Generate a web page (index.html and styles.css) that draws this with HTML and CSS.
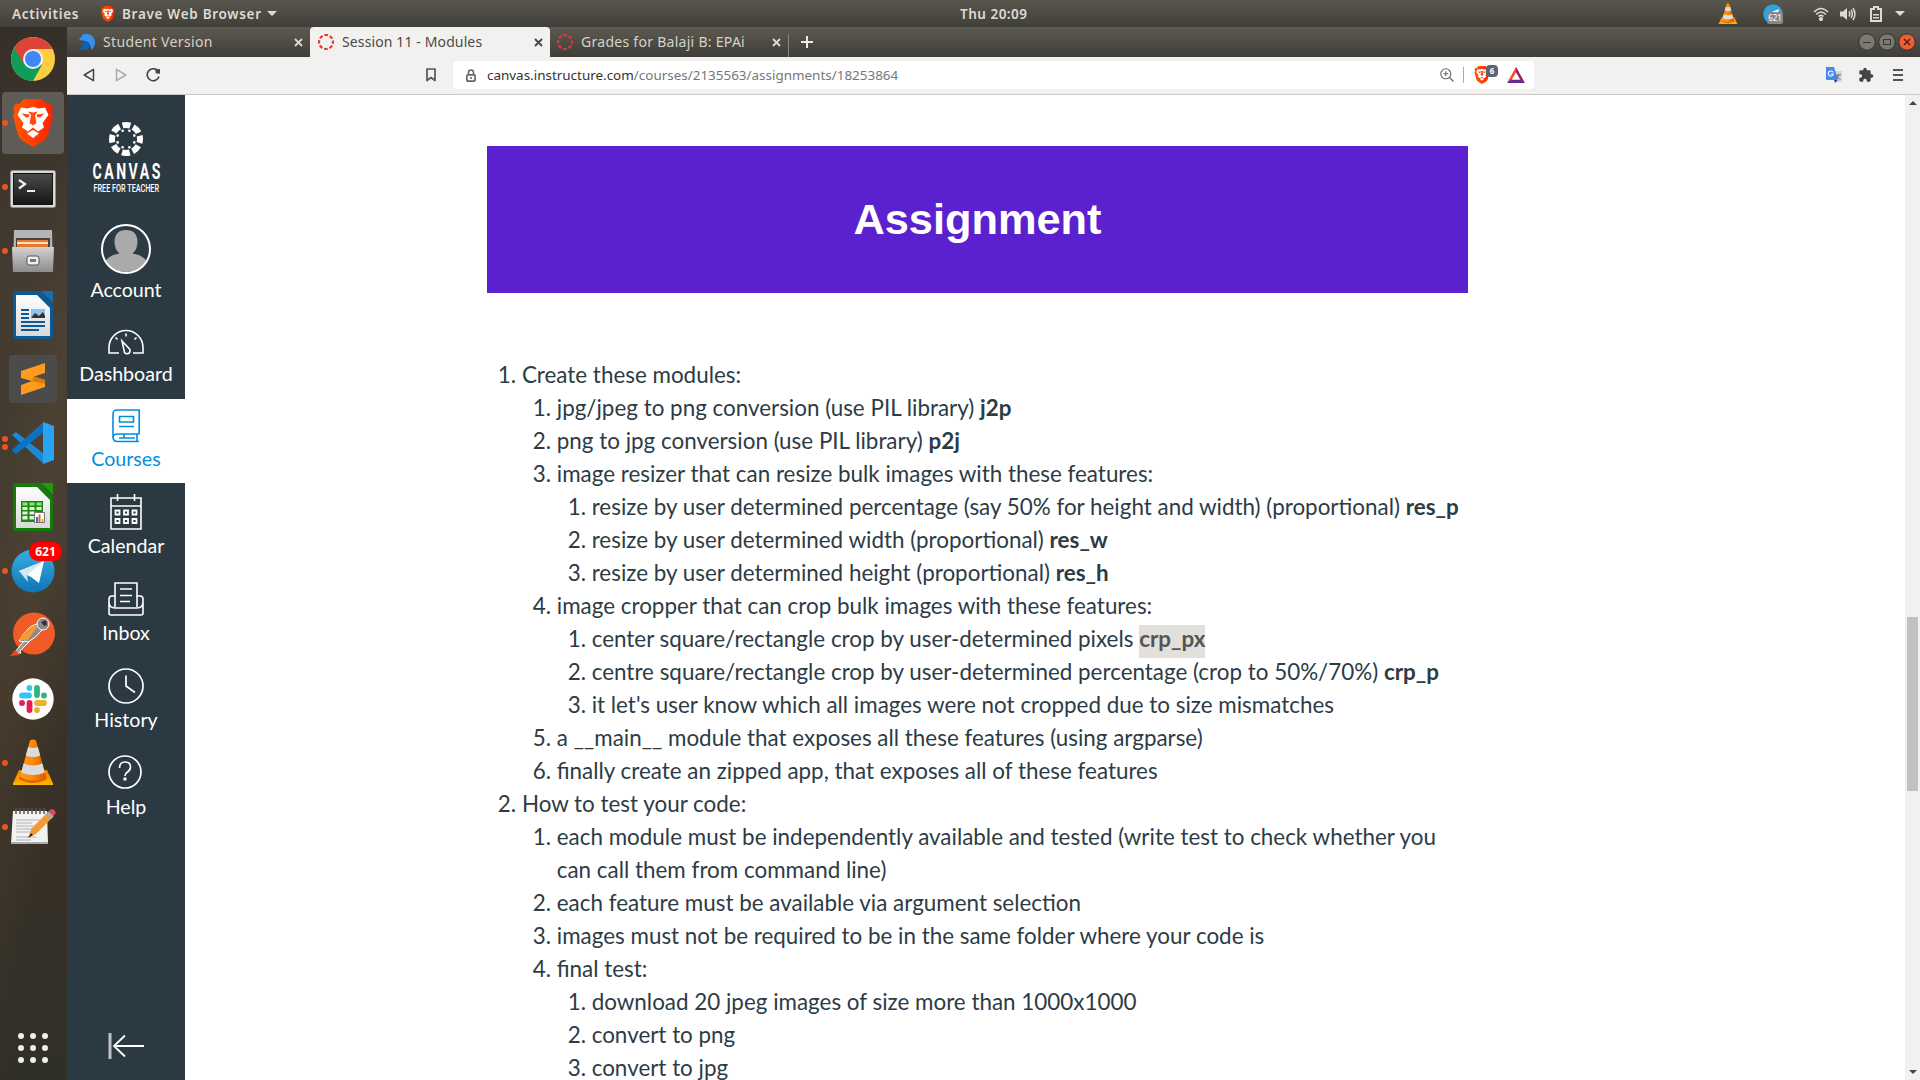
FILE: index.html
```html
<!DOCTYPE html>
<html lang="en">
<head>
<meta charset="utf-8">
<title>Session 11 - Modules</title>
<link rel="stylesheet" href="styles.css">
</head>
<body>
<svg width="0" height="0" class="defs">
  <defs>
    <linearGradient id="gBrave" x1="0" x2="1"><stop offset="0" stop-color="#ff5601"/><stop offset=".5" stop-color="#ff4000"/><stop offset="1" stop-color="#ff1f01"/></linearGradient>
    <linearGradient id="gTerm" x1="0" y1="0" x2="0" y2="1"><stop offset="0" stop-color="#4a4a48"/><stop offset="1" stop-color="#161616"/></linearGradient>
    <linearGradient id="gGrey" x1="0" y1="0" x2="0" y2="1"><stop offset="0" stop-color="#d2d2d2"/><stop offset="1" stop-color="#8c8c8c"/></linearGradient>
    <linearGradient id="gPage" x1="0" y1="0" x2="0" y2="1"><stop offset="0" stop-color="#fff"/><stop offset="1" stop-color="#d8d8d8"/></linearGradient>
    <linearGradient id="gTele" x1="0" y1="0" x2="0" y2="1"><stop offset="0" stop-color="#37aee2"/><stop offset="1" stop-color="#1075b5"/></linearGradient>
    <linearGradient id="gCone" x1="0" x2="1"><stop offset="0" stop-color="#ff9a1f"/><stop offset=".5" stop-color="#ff8a00"/><stop offset="1" stop-color="#d65a00"/></linearGradient>
    <linearGradient id="gBase" x1="0" y1="0" x2="0" y2="1"><stop offset="0" stop-color="#f57c00"/><stop offset="1" stop-color="#ffb300"/></linearGradient>
    <symbol id="cone" viewBox="0 0 42 48">
      <path d="M7 31h28l6 13.500v1.500H1v-1.500z" fill="url(#gBase)"/>
      <path d="M8 36q13 9 26 0l1 4q-14 8-28 0z" fill="#e06500"/>
      <path d="M18 1.500q3-2 6 0L34 38q-13 7-26 0z" fill="url(#gCone)"/>
      <path d="M16.200 8q5 2 9.600 0l2.400 8.500q-7 3-14.400 0zM11.600 24.500q9.500 4 18.800 0l2.400 9q-11.800 5-23.600 0z" fill="#d9dde0"/>
    </symbol>
    <symbol id="ring" viewBox="0 0 16 16"><circle cx="8" cy="8" r="7" fill="none" stroke="#e03c31" stroke-width="2.200" stroke-dasharray="3.600 1.898" stroke-dashoffset="1.800"/></symbol>
    <symbol id="lion" viewBox="0 0 40 48">
      <path d="M11 0h18l5 5 3-.5 3 5-1.500 4L40 17l-5 19q-1 3-4 5.500L20 48 9 41.500Q6 39 5 36L0 17l1.500-3.500L0 9.500l3-5 3 .5z" fill="url(#gBrave)"/>
      <path d="M8 8.500l6 1 6-1.500 6 1.500 6-1L35.500 16l-6 8 1.500 4.500-6 4-5-4-5 4-6-4 1.500-4.500-6-8zM20 31l6 3.500-6 4.500-6-4.500z" fill="#fff"/>
      <path d="M8.500 14.500l8 1-.5 2.500-3 .5zM31.500 14.500l-8 1 .5 2.500 3 .5zM18 16l-1.500 8 3.500 2.500 3.500-2.500L22 16l3-3.500-5 1-5-1z" fill="#ff4a10"/>
    </symbol>
  </defs>
</svg>

<header class="topbar">
  <span class="activities">Activities</span>
  <svg class="app-ico" width="14" height="16"><use href="#lion"/></svg>
  <span class="app-name">Brave Web Browser</span>
  <i class="caret"></i>
  <time class="clock">Thu 20:09</time>
  <div class="tray">
    <svg width="20" height="22"><use href="#cone"/></svg>
    <div class="tray-tele"><svg width="20" height="20" viewBox="0 0 20 20"><circle cx="10" cy="10" r="9.800" fill="#2ba3dc"/><path d="M4 10l12-5-2 9z" fill="#fff"/></svg><b>621</b></div>
    <svg class="t-wifi" width="16" height="14" viewBox="0 0 16 14" fill="none" stroke="#dcdad5" stroke-width="1.600"><path d="M1 5q7-7 14 0M3.200 7.300q4.800-4.600 9.600 0M5.500 9.500q2.500-2.200 5 0"/><circle cx="8" cy="12" r="1.300" fill="#dcdad5"/></svg>
    <svg class="t-vol" width="16" height="14" viewBox="0 0 16 14" fill="none" stroke="#dcdad5" stroke-width="1.500"><path d="M0 4.500h3L7 1v12L3 9.500H0z" fill="#dcdad5" stroke="none"/><path d="M9 4.500q1.500 2.500 0 5M11 2.800q2.600 4.200 0 8.400M13 1q3.800 6 0 12"/></svg>
    <svg class="t-bat" width="12" height="16" viewBox="0 0 12 16"><path d="M4 1h4v2h3v12H1V3h3z" fill="none" stroke="#dcdad5" stroke-width="2"/><path d="M3 8h6v1.500H3zM3 11h6v1.500H3z" fill="#dcdad5"/></svg>
    <i class="caret"></i>
  </div>
</header>

<div class="desktop">
  <nav class="dock">
    <div class="app"><svg width="46" height="46" viewBox="0 0 46 46"><circle cx="23" cy="23" r="22" fill="#ffcd40"/><path d="M23 23L4 12A22 22 0 0 0 23 45l9-16z" fill="#0f9d58"/><path d="M4 12A22 22 0 0 1 42.300 13H23L14 28z" fill="#db4437"/><circle cx="23" cy="23" r="10" fill="#f1f1f1"/><circle cx="23" cy="23" r="8" fill="#4285f4"/></svg></div>
    <div class="app active run"><svg width="40" height="48"><use href="#lion"/></svg></div>
    <div class="app run term"><svg width="46" height="38" viewBox="0 0 46 38"><rect x=".5" y=".5" width="45" height="37" rx="2" fill="#d9d9d9" stroke="#8f8f8f"/><rect x="3.500" y="3.500" width="39" height="31" fill="url(#gTerm)" stroke="#111"/><path d="M9 10l6 4-6 4.500M17 21h8" fill="none" stroke="#eee" stroke-width="2.200"/></svg></div>
    <div class="app run"><svg width="42" height="44" viewBox="0 0 42 44"><path d="M2 1h38l1 41H1z" fill="#b4b4b4"/><path d="M4 9h34v9H4z" fill="#4a4038"/><path d="M5 11h31v8H5z" fill="#e8772e"/><path d="M5 13h31v2H5z" fill="#fbe0bd"/><path d="M0 18h42l-1 25H1z" fill="url(#gGrey)"/><rect x="15" y="27" width="12" height="9" rx="2" fill="#eee" stroke="#555"/><path d="M18 30h6v3h-6z" fill="#777"/></svg></div>
    <div class="app"><svg width="40" height="48" viewBox="0 0 40 48"><path d="M2 0h26l12 14v32q0 2-2 2H2q-2 0-2-2V2q0-2 2-2z" fill="#0c5a93"/><path d="M28 0h12v12z" fill="#1270b4"/><path d="M3 4h21l13 13v28H3z" fill="url(#gPage)"/><path d="M8 18h8v2H8zm0 4h8v2H8zm0 4h8v2H8zm0 4h24v2H8zm0 4h24v2H8zm0 4h18v2H8z" fill="#0c5a93"/><path d="M18 18h14v9H18z" fill="#88c6ee"/><path d="M18 27l4-5 4 3 4-4 2 4v2z" fill="#333"/></svg></div>
    <div class="app"><svg width="48" height="48" viewBox="0 0 48 48"><rect width="48" height="48" rx="3" fill="#4b4b4b"/><path d="M12 16l24-8v10l-11 3.500L36 25v7l-24 8V30l11-4-11-3z" fill="#ff9a1f"/><path d="M25 21.500L36 25v4l-13-3z" fill="#d97a10"/></svg></div>
    <div class="app run two"><svg width="42" height="42" viewBox="0 0 42 42"><path d="M0 28l4 4L32 9V0z" fill="#0a6fba"/><path d="M0 13l4-3 28 22v10z" fill="#1a8ad6"/><path d="M0 28L32 0v10L4 32z" fill="#0c72bd"/><path d="M31 0l11 4v34l-11 4z" fill="#2aa3f0"/></svg></div>
    <div class="app"><svg width="40" height="48" viewBox="0 0 40 48"><path d="M2 0h26l12 14v32q0 2-2 2H2q-2 0-2-2V2q0-2 2-2z" fill="#157a08"/><path d="M28 0h12v12z" fill="#1d9a0a"/><path d="M3 4h21l13 13v28H3z" fill="url(#gPage)"/><path d="M8 18h22v21H8z" fill="#1c8a10"/><path d="M9.500 19.500h5v3h-5zm7 0h5v3h-5zm7 0h5v3h-5z" fill="#8ce57e"/><path d="M9.500 24h5v3h-5zm7 0h5v3h-5zm7 0h5v3h-5zm-14 4.500h5v3h-5zm7 0h5v3h-5zm-7 4.500h5v3.500h-5zm7 0h5v3.500h-5z" fill="#e8f6e4"/><path d="M21.500 29.500h10v10h-10z" fill="#fff" stroke="#777"/><path d="M23 34h2v5h-2z" fill="#1e7cc8"/><path d="M25.500 31.500h2V39h-2z" fill="#e8641a"/><path d="M28.500 36h2v3h-2z" fill="#f0b020"/></svg></div>
    <div class="app run"><svg width="44" height="44" viewBox="0 0 44 44"><circle cx="22" cy="22" r="21.500" fill="url(#gTele)"/><path d="M8 22l25-10-5 22-8-6z" fill="#fff"/><path d="M8 22l25-10-17 14 1 7z" fill="#d3e6f2"/></svg><b class="badge">621</b></div>
    <div class="app"><svg width="46" height="46" viewBox="0 0 46 46"><circle cx="24" cy="21.500" r="21" fill="#f15a29"/><path d="M9 29q8-15 18-17l5 6q-6 8-14 12z" fill="#8b8b8b" stroke="#fff"/><path d="M9 28q6-11 16-15l2 2-9 13z" fill="#f79a31"/><circle cx="33" cy="12" r="6" fill="#8b8b8b" stroke="#fff"/><path d="M31 10l5-2 1 5-3 1z" fill="#333"/><path d="M14 29L4 41h7l-1-2 9-9z" fill="#999" stroke="#fff"/><path d="M5 38l-5 6 10-1z" fill="#e04a1d"/></svg></div>
    <div class="app"><svg width="42" height="42" viewBox="0 0 42 42"><circle cx="21" cy="21" r="20.700" fill="#fff"/><g stroke-width="5.800" stroke-linecap="round"><path d="M25 10v7M32 17.500h.1" stroke="#2eb67d"/><path d="M10 17.500h7M17.500 10v.1" stroke="#36c5f0"/><path d="M17.500 25v7M10 25h.1" stroke="#e01e5a"/><path d="M25 25h7M25 32v.1" stroke="#ecb22e"/></g></svg></div>
    <div class="app run"><svg width="42" height="48"><use href="#cone"/></svg></div>
    <div class="app run"><svg width="48" height="40" viewBox="0 0 48 40"><path d="M4 4h34l1 33H2z" fill="#f2f2f2"/><path d="M2 35h37v2H2z" fill="#aaa"/><path d="M7 13h24M7 16h16M7 19h21M7 22h22M7 25h14M7 30h20M7 33h15" stroke="#b2b2b2"/><path d="M7 1v6M11 1v6M15 1v6M19 1v6M23 1v6M27 1v6M31 1v6M35 1v6" stroke="#555" stroke-width="1.500"/><path d="M39 5l5 5-17 17-7 3 2-8z" fill="#f29a34"/><path d="M39 5l3-3q5 0 4.500 4.500L44 10z" fill="#d94b52"/><path d="M37 7l2.500-2.500 5 5L42 12z" fill="#aaa"/><path d="M22 26l-3 5 5-3z" fill="#222"/></svg></div>
    <svg class="grid" width="32" height="32" viewBox="0 0 32 32" fill="#eeeeec"><circle cx="4" cy="4" r="3"/><circle cx="16" cy="4" r="3"/><circle cx="28" cy="4" r="3"/><circle cx="4" cy="16" r="3"/><circle cx="16" cy="16" r="3"/><circle cx="28" cy="16" r="3"/><circle cx="4" cy="28" r="3"/><circle cx="16" cy="28" r="3"/><circle cx="28" cy="28" r="3"/></svg>
  </nav>

  <div class="window">
    <div class="tabs">
      <div class="tab t1"><svg width="16" height="16" viewBox="0 0 16 16"><path d="M4 0h5q7 2 7 9 0 4-4 7 0-7-5-9l-7-1z" fill="#3391f0"/><path d="M5 7q6 1 6 5l-3 4H0l4-4H0q4-1 5-5z" fill="#0a62b8"/></svg><span>Student Version</span><svg class="x" width="9" height="9" viewBox="0 0 9 9"><path d="M1 1l7 7M8 1L1 8"/></svg></div>
      <div class="tab t2"><svg width="16" height="16"><use href="#ring"/></svg><span>Session 11 - Modules</span><svg class="x" width="9" height="9" viewBox="0 0 9 9"><path d="M1 1l7 7M8 1L1 8"/></svg></div>
      <div class="tab t3"><svg width="16" height="16"><use href="#ring"/></svg><span>Grades for Balaji B: EPAi</span><svg class="x" width="9" height="9" viewBox="0 0 9 9"><path d="M1 1l7 7M8 1L1 8"/></svg></div>
      <i class="divider"></i>
      <svg class="plus" width="12" height="12" viewBox="0 0 12 12"><path d="M6 0v12M0 6h12" stroke="#eceae6" stroke-width="2"/></svg>
      <div class="winbtns">
        <svg width="18" height="18" viewBox="0 0 18 18"><circle cx="9" cy="9" r="8.200" fill="#7b7970" stroke="#35342f"/><path d="M5 9.500h8" stroke="#35342f"/></svg>
        <svg width="18" height="18" viewBox="0 0 18 18"><circle cx="9" cy="9" r="8.200" fill="#7b7970" stroke="#35342f"/><path d="M5.500 6.500h7v5h-7z" fill="none" stroke="#35342f"/></svg>
        <svg width="18" height="18" viewBox="0 0 18 18"><circle cx="9" cy="9" r="8.200" fill="#ea5f33" stroke="#35342f"/><path d="M6 6l6 6M12 6l-6 6" stroke="#45200f" stroke-width="1.300"/></svg>
      </div>
    </div>
    <div class="toolbar">
      <svg class="back" width="12" height="14" viewBox="0 0 12 14"><path d="M10.500 1.300v11.400L1.200 7z" fill="none" stroke="#444" stroke-width="1.500" stroke-linejoin="round"/></svg>
      <svg class="fwd" width="12" height="14" viewBox="0 0 12 14"><path d="M1.500 1.300v11.400L10.800 7z" fill="none" stroke="#aaa" stroke-width="1.500" stroke-linejoin="round"/></svg>
      <svg class="reload" width="15" height="14" viewBox="0 0 15 14"><path d="M11.500 2.500A6 6 0 1 0 13 8.500" fill="none" stroke="#444" stroke-width="1.600"/><path d="M9.500 1.500L14 1v4.500q-3 1-4.500-1z" fill="#444"/></svg>
      <svg class="bm" width="10" height="14" viewBox="0 0 10 14"><path d="M1 1h8v11.500L5 9.500l-4 3z" fill="none" stroke="#555" stroke-width="1.700" stroke-linejoin="round"/></svg>
      <div class="url">
        <svg class="lock" width="10" height="13" viewBox="0 0 10 13"><path d="M2.500 6V3.500q0-2.500 2.500-2.500t2.500 2.500V6" fill="none" stroke="#666" stroke-width="1.600"/><rect x=".9" y="5.900" width="8.200" height="6.200" rx="1" fill="none" stroke="#666" stroke-width="1.700"/><path d="M4.200 8h1.600v2H4.200z" fill="#666"/></svg>
        <span class="addr">canvas.instructure.com<em>/courses/2135563/assignments/18253864</em></span>
        <svg class="mag" width="14" height="14" viewBox="0 0 14 14" fill="none" stroke="#666" stroke-width="1.100"><circle cx="5.800" cy="5.800" r="5"/><path d="M9.500 9.500l4 4M3.300 5.800h5M5.800 3.300v5"/></svg>
        <i class="sep"></i>
        <div class="shield"><svg width="16" height="18"><use href="#lion"/></svg><b>6</b></div>
        <svg class="bat" width="18" height="16" viewBox="0 0 18 16"><path d="M9 0l3 5-6 7-6 4z" fill="#ff4724"/><path d="M9 0l9 16-6-4-3-7z" fill="#9e1f63"/><path d="M0 16l4-3.500h10l4 3.500z" fill="#662d91"/><path d="M9 5.500l4.200 7H4.800z" fill="#fff"/></svg>
      </div>
      <svg class="gt" width="17" height="16" viewBox="0 0 17 16"><path d="M6 4h10v11H9z" fill="#d8d8d8"/><path d="M0 0h8l4 13H1q-1 0-1-1z" fill="#4a86f0"/><path d="M8 13h4l-3 3z" fill="#2850b8"/><path d="M7 5.200A2.500 2.500 0 1 0 7.300 7H5" fill="none" stroke="#fff" stroke-width="1.200"/><path d="M10 8h5M12.500 7v1q-.5 3-2.500 4M11 9q1 2.500 3.500 3.500" fill="none" stroke="#5d7588"/></svg>
      <svg class="puz" width="16" height="16" viewBox="0 0 24 24"><path d="M20.500 11H19V7a2 2 0 0 0-2-2h-4V3.500a2.500 2.500 0 0 0-5 0V5H4a2 2 0 0 0-2 2v3.800h1.500a2.700 2.700 0 0 1 0 5.400H2V20a2 2 0 0 0 2 2h3.800v-1.500a2.700 2.700 0 0 1 5.400 0V22H17a2 2 0 0 0 2-2v-4h1.500a2.500 2.500 0 0 0 0-5z" fill="#444"/></svg>
      <svg class="ham" width="10" height="12" viewBox="0 0 10 12"><path d="M0 1h10M0 6h10M0 11h10" stroke="#555" stroke-width="1.800"/></svg>
    </div>

    <div class="page">
      <nav class="side">
        <div class="logo">
          <svg width="74" height="78" viewBox="0 0 74 78" fill="#fff">
            <g transform="translate(35 18)"><circle r="14" fill="none" stroke="#fff" stroke-width="6" stroke-dasharray="7.900 3.096" stroke-dashoffset="3.950"/>
            <circle cx="8.300" cy="3.400" r="1.300"/><circle cx="3.400" cy="8.300" r="1.300"/><circle cx="-3.400" cy="8.300" r="1.300"/><circle cx="-8.300" cy="3.400" r="1.300"/><circle cx="8.300" cy="-3.400" r="1.300"/><circle cx="3.400" cy="-8.300" r="1.300"/><circle cx="-3.400" cy="-8.300" r="1.300"/><circle cx="-8.300" cy="-3.400" r="1.300"/></g>
            <text class="lg1" transform="translate(1.500 58) scale(.64 1)" textLength="106">CANVAS</text>
            <text class="lg2" x="2.500" y="71" textLength="65.500" lengthAdjust="spacingAndGlyphs">FREE FOR TEACHER</text>
          </svg>
        </div>
        <a class="item acc"><svg width="50" height="50" viewBox="0 0 50 50"><circle cx="25" cy="25" r="24" fill="#2d3b45"/><path d="M4.500 37q4-6 14-7.500-5-4-5-12Q14 6 25 6t11.500 11.500q0 8-5 12 10 1.500 14 7.500Q38 48 25 48T4.500 37z" fill="#aaa"/><circle cx="25" cy="25" r="24" fill="none" stroke="#fff" stroke-width="2"/></svg><span>Account</span></a>
        <a class="item dash"><svg width="36" height="36" viewBox="0 0 36 36" fill="none" stroke="#fff" stroke-width="1.600"><path d="M11 31H1v-5.500a17 17 0 0 1 34 0V31H25M18 11.500v3M7.500 15.500l2 2M28.500 15.500l-2 2"/><path d="M14 19l7.500 8a3 3 0 1 1-5 3.500z"/></svg><span>Dashboard</span></a>
        <a class="item sel"><svg width="36" height="36" viewBox="0 0 36 36" fill="none" stroke="#008ee2" stroke-width="1.600"><path d="M31.200 27V3H9q-4 0-4 4v23q0 4.500 4.500 4.500H31M31.200 27H9.500Q5 27 5 31M29 27v7M11 31h16M16 27v4"/><path d="M11.500 9.500h14v5.500h-14zM11 19.500h15" /></svg><span>Courses</span></a>
        <a class="item"><svg width="36" height="36" viewBox="0 0 36 36" fill="none" stroke="#fff" stroke-width="1.600"><path d="M3 4h30v31H3zM3 12h30M9.500 0v7M26.500 0v7"/><g stroke-width="1.800"><path d="M7.500 16.500h4v4h-4zM16 16.500h4v4h-4zM24.500 16.500h4v4h-4zM7.500 25h4v4h-4zM16 25h4v4h-4zM24.500 25h4v4h-4z"/></g></svg><span>Calendar</span></a>
        <a class="item"><svg width="36" height="36" viewBox="0 0 36 36" fill="none" stroke="#fff" stroke-width="1.600"><path d="M7 26V2h22v24M7 15H4q-3 0-3 3v14q0 2 2 2h30q2 0 2-2V18q0-3-3-3h-3M1 21q0 6 6 6h22q6 0 6-6M12 8h12M12 14.500h12M12 20.500h10"/></svg><span>Inbox</span></a>
        <a class="item"><svg width="36" height="36" viewBox="0 0 36 36" fill="none" stroke="#fff" stroke-width="1.700"><circle cx="18" cy="18" r="17"/><path d="M18 7.500V18l9 6.500"/></svg><span>History</span></a>
        <a class="item"><svg width="36" height="36" viewBox="0 0 36 36" fill="none" stroke="#fff" stroke-width="1.700"><circle cx="17" cy="17" r="16"/><path d="M11.500 13q0-6 5.500-6t5.500 5q0 3-3 5-2.500 1.500-2.500 4"/><path d="M15.500 22.500h3v3h-3z" fill="#fff" stroke="none"/></svg><span>Help</span></a>
        <svg class="collapse" width="36" height="26" viewBox="0 0 36 26" fill="none" stroke="#fff" stroke-width="1.800"><path d="M2 0v26" stroke="#bcc2c6" stroke-width="3"/><path d="M36 13H6M17 2.500L6 13l11 10.500"/></svg>
      </nav>
      <main class="content">
        <article>
          <h1>Assignment</h1>
          <ol>
            <li>Create these modules:
              <ol>
                <li>jpg/jpeg to png conversion (use PIL library) <b>j2p</b></li>
                <li>png to jpg conversion (use PIL library) <b>p2j</b></li>
                <li>image resizer that can resize bulk images with these features:
                  <ol>
                    <li>resize by user determined percentage (say 50% for height and width) (proportional) <b>res_p</b></li>
                    <li>resize by user determined width (proportional) <b>res_w</b></li>
                    <li>resize by user determined height (proportional) <b>res_h</b></li>
                  </ol></li>
                <li>image cropper that can crop bulk images with these features:
                  <ol>
                    <li>center square/rectangle crop by user-determined pixels <b class="hit">crp_px</b></li>
                    <li>centre square/rectangle crop by user-determined percentage (crop to 50%/70%) <b>crp_p</b></li>
                    <li>it let's user know which all images were not cropped due to size mismatches</li>
                  </ol></li>
                <li>a __main__ module that exposes all these features (using argparse)</li>
                <li>finally create an zipped app, that exposes all of these features</li>
              </ol></li>
            <li>How to test your code:
              <ol>
                <li>each module must be independently available and tested (write test to check whether you<br>can call them from command line)</li>
                <li>each feature must be available via argument selection</li>
                <li>images must not be required to be in the same folder where your code is</li>
                <li>final test:
                  <ol>
                    <li>download 20 jpeg images of size more than 1000x1000</li>
                    <li>convert to png</li>
                    <li>convert to jpg</li>
                  </ol></li>
              </ol></li>
          </ol>
        </article>
      </main>
      <div class="scroll"><i class="up"></i><i class="thumb"></i><i class="down"></i></div>
    </div>
  </div>
</div>
</body>
</html>
```
FILE: styles.css
```css
* { box-sizing: border-box; }
body { margin: 0; width: 1920px; height: 1080px; overflow: hidden; display: flex; flex-direction: column; font-family: "Noto Sans", sans-serif; }
svg { display: block; flex: none; }
.defs { position: absolute; }

/* system bar */
.topbar { height: 27px; display: flex; align-items: center; background: linear-gradient(#59564e, #403f3a); color: #dfdbd2; font-size: 13.500px; font-weight: 600; letter-spacing: .7px; white-space: nowrap; flex: none; }
.activities { width: 89px; padding-left: 12px; }
.app-ico { margin: 0 7px 0 12px; }
.app-name { width: 141px; }
.caret { border: 5px solid transparent; border-top-color: #dfdbd2; border-bottom: 0; margin-left: 4px; }
.clock { width: 68px; margin-left: 683px; letter-spacing: .5px; }
.tray { margin-left: auto; display: flex; align-items: center; padding-right: 15px; }
.tray-tele { position: relative; margin-left: 25px; }
.tray-tele b { position: absolute; left: 4px; top: 8px; width: 16px; height: 12px; background: #888; border-radius: 2px; font-size: 8px; line-height: 12px; text-align: center; color: #fff; font-weight: 400; letter-spacing: 0; }
.t-wifi { margin-left: 30px; }
.t-vol { margin-left: 11px; }
.t-bat { margin-left: 14px; }
.tray .caret { margin-left: 13px; }

.desktop { flex: 1; display: flex; min-height: 0; }

/* launcher */
.dock { width: 67px; padding-right: 1px; flex: none; display: flex; flex-direction: column; align-items: center; background: linear-gradient(100deg, rgba(0,0,0,.08) 30%, rgba(90,70,45,.14) 50%, rgba(0,0,0,.12) 75%), linear-gradient(#3a332c, #4a4035 25%, #494134 50%, #40372b 70%, #37352d); }
.app { width: 62px; height: 62px; margin: 1px 0; display: flex; align-items: center; justify-content: center; position: relative; border-radius: 4px; flex: none; }
.app.active { background: #5f5b56; }
.app.term { padding-top: 3px; }
.app.run::before { content: ""; position: absolute; left: 0; top: 28px; width: 6px; height: 6px; border-radius: 50%; background: #e95420; }
.app.two::before { top: 24px; box-shadow: 0 8px #e95420; }
.badge { position: absolute; left: 27px; top: 2px; width: 33px; height: 19px; border-radius: 9px; background: #f00; color: #fff; font-size: 12px; line-height: 19px; text-align: center; }
.grid { margin-top: auto; margin-bottom: 16px; }

/* browser chrome */
.window { flex: 1; display: flex; flex-direction: column; min-width: 0; }
.tabs { height: 30px; display: flex; align-items: center; background: linear-gradient(#5d5a51, #3e3d38); flex: none; color: #d6d2c8; font-size: 14px; }
.tab { height: 30px; display: flex; align-items: center; white-space: nowrap; }
.tab span { margin-left: 8px; padding-bottom: 1px; }
.tab .x { margin-left: auto; fill: none; stroke: #dedad2; stroke-width: 1.800; }
.t1 { width: 243px; padding: 0 7px 0 12px; letter-spacing: .35px; }
.t2 { width: 240px; padding: 0 7px 0 8px; background: #f2f1f0; color: #4a4a48; border-radius: 4px 4px 0 0; letter-spacing: .12px; }
.t2 .x { stroke: #444; }
.t3 { width: 238px; padding: 0 7px; letter-spacing: .28px; }
.divider { width: 1px; height: 23px; background: #8a877e; align-self: flex-end; }
.plus { margin-left: 12px; }
.winbtns { margin-left: auto; display: flex; gap: 2px; padding-right: 4px; }
.toolbar { height: 38px; padding-bottom: 1px; display: flex; align-items: center; background: #f2f1f0; border-bottom: 1px solid #c9c7c5; flex: none; }
.back { margin-left: 16px; }
.fwd { margin-left: 20px; }
.reload { margin-left: 19px; }
.bm { margin-left: 265px; }
.url { margin-left: 17px; width: 1081px; height: 28px; background: #fff; border-radius: 4px; display: flex; align-items: center; }
.lock { margin-left: 13px; }
.addr { margin-left: 11px; font-size: 13.450px; color: #333; white-space: nowrap; }
.addr em { font-style: normal; color: #777; }
.mag { margin-left: auto; }
.sep { width: 1px; height: 16px; background: #aaa; margin-left: 9px; }
.shield { margin-left: 10px; position: relative; }
.shield b { position: absolute; left: 12px; top: -1px; width: 12px; height: 12px; border-radius: 4px; background: #5f6270; color: #fff; font-size: 8px; line-height: 12px; text-align: center; }
.bat { margin: 0 9px 0 17px; }
.gt { margin-left: 292px; }
.puz { margin-left: 15px; }
.ham { margin-left: 19px; }

/* page */
.page { flex: 1; display: flex; min-height: 0; background: #fff; }
.side { width: 118px; flex: none; background: #2b3942; display: flex; flex-direction: column; font-family: Lato, sans-serif; font-size: 19.600px; line-height: 24px; color: #fff; }
.logo { height: 114px; padding: 26px 0 0 24px; flex: none; }
.lg1 { font: 700 22px Roboto, sans-serif; }
.lg2 { font: 500 10.500px Roboto, sans-serif; }
.item { height: 87px; flex: none; display: flex; flex-direction: column; align-items: center; justify-content: flex-end; gap: 4px; padding-bottom: 12px; }
.acc { height: 106px; padding-bottom: 13px; }
.dash { height: 84px; padding-bottom: 13px; }
.sel { height: 84px; background: #fff; color: #008ee2; }
.collapse { margin: auto 0 21px 41px; }
.content { flex: 1; overflow: hidden; }
article { width: 981px; margin: 51px 0 0 302px; color: #2d3b45; font: 22.410px/33px Lato, sans-serif; }
h1 { margin: 0 0 65px; height: 147px; background: #5b21cf; color: #fff; text-align: center; font: bold 43.350px/146px "Liberation Sans", sans-serif; }
ol { margin: 0; padding-left: 34.900px; white-space: nowrap; }
.hit { padding-bottom: 6px; background: #e1e0dc; color: #555; }
.scroll { width: 15px; flex: none; background: #f1f1f1; display: flex; flex-direction: column; align-items: center; }
.up { border: 4px solid transparent; border-bottom-color: #444; border-top: 0; margin-top: 6px; }
.thumb { width: 11px; height: 174px; background: #c1c1c1; margin-top: 512px; }
.down { border: 4px solid transparent; border-top-color: #444; border-bottom: 0; margin: auto 0 6px; }
```
